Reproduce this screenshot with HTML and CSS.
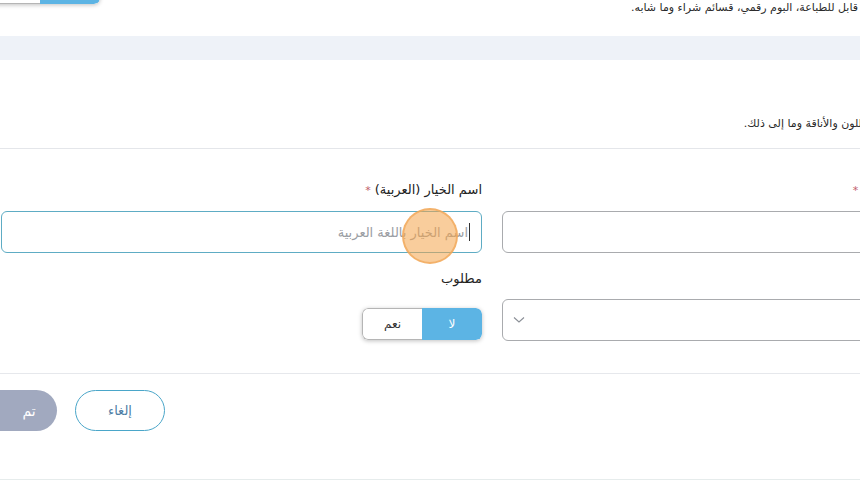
FILE: index.html
```html
<!DOCTYPE html>
<html lang="ar" dir="rtl">
<head>
<meta charset="utf-8">
<link rel="stylesheet" href="styles.css">
</head>
<body>
<div class="page">
  <div class="top-row">
    <p class="desc top-desc">قابل للطباعة، البوم رقمي، قسائم شراء وما شابه.</p>
    <div class="toggle top-toggle">
      <span class="seg seg-on"></span>
      <span class="seg"></span>
    </div>
  </div>
  <div class="band"></div>
  <div class="options-head">
    <p class="desc head-desc">اللون والأناقة وما إلى ذلك.</p>
  </div>
  <div class="form-grid">
    <div class="field">
      <label class="label">اسم الخيار (الإنجليزية) <span class="req">*</span></label>
      <div class="input"></div>
    </div>
    <div class="field">
      <label class="label">اسم الخيار (العربية) <span class="req">*</span></label>
      <div class="input input-focus">
        <span class="caret"></span>
        <span class="placeholder">اسم الخيار باللغة العربية</span>
        <span class="click-dot"></span>
      </div>
    </div>
    <div class="field">
      <label class="label">نوع الخيار</label>
      <div class="input select">
        <svg class="chev" width="12" height="8" viewBox="0 0 12 8"><path d="M1 1.5 L6 6 L11 1.5" fill="none" stroke="#8a8f96" stroke-width="1.1"/></svg>
      </div>
    </div>
    <div class="field">
      <label class="label">مطلوب</label>
      <div class="toggle">
        <span class="seg seg-on">لا</span>
        <span class="seg">نعم</span>
      </div>
    </div>
  </div>
  <div class="actions">
    <button class="btn btn-cancel">إلغاء</button>
    <button class="btn btn-done">تم</button>
  </div>
</div>
</body>
</html>
```
FILE: styles.css
```css
html, body {
  margin: 0;
  padding: 0;
  background: #ffffff;
  overflow: hidden;
  width: 860px;
  height: 481px;
}
body {
  font-family: "DejaVu Sans", "Noto Sans", sans-serif;
  color: #222;
  font-size: 14px;
}
.page {
  width: 983px;
  margin-right: -123px;
}
.desc {
  margin: 0;
  font-size: 11px;
  line-height: 16px;
  color: #2a2a2a;
  white-space: nowrap;
}
.top-row {
  display: flex;
  justify-content: space-between;
  align-items: flex-start;
  margin-top: -28px;
  height: 32px;
}
.top-desc {
  margin-top: 28px;
  margin-right: 125px;
}
.head-desc {
  margin-right: 118px;
}
.band {
  margin-top: 32px;
  height: 24px;
  background: #eef2f8;
}
.options-head {
  padding: 56px 0 16px;
  border-bottom: 1px solid #e4e6ea;
}
.form-grid {
  display: grid;
  grid-template-columns: 481px 481px;
  column-gap: 20px;
  row-gap: 16px;
  padding: 31px 0 32px 1px;
  border-bottom: 1px solid #e6e8ec;
}
.field {
  display: flex;
  flex-direction: column;
  align-items: flex-start;
}
.label {
  font-size: 13px;
  line-height: 20px;
  color: #222;
  margin-bottom: 10px;
}
.req {
  color: #c0606a;
  font-size: 11px;
}
.input {
  position: relative;
  align-self: stretch;
  box-sizing: border-box;
  height: 42px;
  border: 1px solid #a9abae;
  border-radius: 6px;
  background: #fff;
  display: flex;
  align-items: center;
  padding: 0 11px;
}
.input-focus {
  border-color: #5eacc4;
}
.placeholder {
  font-size: 13px;
  color: #9a9da3;
  white-space: nowrap;
}
.caret {
  width: 1px;
  height: 18px;
  background: #333;
  margin-left: 1px;
}
.click-dot {
  position: absolute;
  left: 400px;
  top: -4px;
  width: 52px;
  height: 52px;
  border-radius: 50%;
  background: rgba(244, 164, 74, 0.55);
  border: 2px solid rgba(240, 168, 90, 0.75);
}
.select {
  justify-content: flex-end;
  padding-left: 10px;
}
.chev {
  display: block;
}
.toggle {
  display: flex;
  margin-top: 9px;
  height: 32px;
  border-radius: 6px;
  box-shadow: 0 1px 4px rgba(0, 0, 0, 0.25);
  overflow: hidden;
}
.top-row .top-toggle {
  margin-top: 0;
  margin-left: -20px;
}
.seg {
  box-sizing: border-box;
  width: 60px;
  height: 32px;
  display: flex;
  align-items: center;
  justify-content: center;
  font-size: 12px;
  color: #333;
  background: #fff;
  border: 1px solid #b5b5b5;
  border-right: none;
  border-radius: 6px 0 0 6px;
}
.seg-on {
  background: #5cb4e4;
  color: #fff;
  border: none;
  border-radius: 0 6px 6px 0;
}
.actions {
  display: flex;
  justify-content: flex-end;
  gap: 18px;
  padding: 16px 0 48px;
  border-bottom: 1px solid #e6ecec;
}
.btn {
  box-sizing: border-box;
  width: 90px;
  height: 41px;
  border-radius: 21px;
  font-family: inherit;
  font-size: 13px;
}
.btn-cancel {
  background: #fff;
  border: 1px solid #4aa6c9;
  color: #4d7ea6;
}
.btn-done {
  background: #a1a9bf;
  border: none;
  color: #fff;
  font-size: 14px;
  margin-left: -33px;
  padding-left: 40px;
}
```
